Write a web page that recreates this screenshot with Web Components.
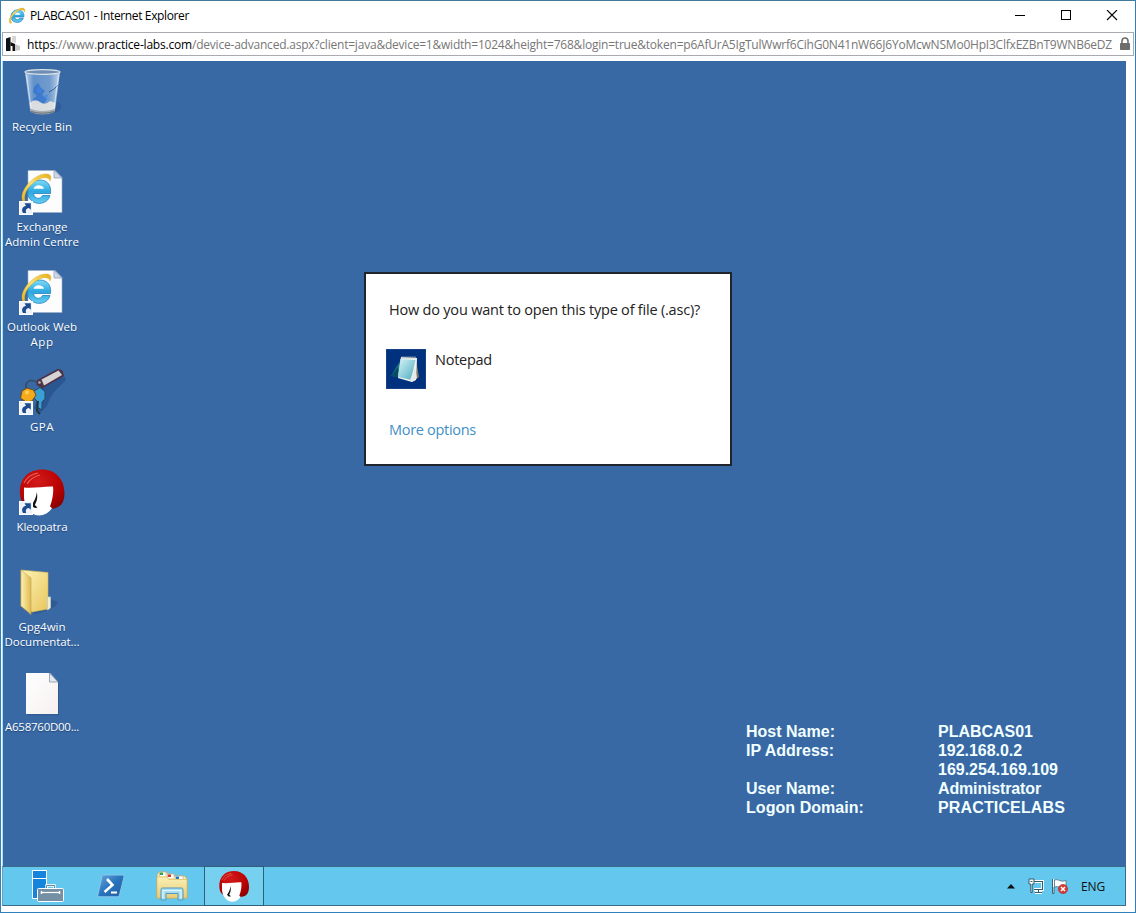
<!DOCTYPE html>
<html lang="en">
<head>
<meta charset="utf-8">
<title>PLABCAS01 - Internet Explorer</title>
<style>
html,body{margin:0;height:100%;overflow:hidden;background:#fff}
</style>
</head>
<body>
<browser-window></browser-window>
<script>
const ie = `
 <linearGradient id="b" x1="0" y1="0" x2="0" y2="1"><stop offset="0" stop-color="#7fdcf8"/><stop offset=".5" stop-color="#2aa7e0"/><stop offset="1" stop-color="#66cdf2"/></linearGradient>
 <linearGradient id="y" x1="0" y1="1" x2="1" y2="0"><stop offset="0" stop-color="#e9b41c"/><stop offset=".5" stop-color="#fbe274"/><stop offset="1" stop-color="#e6ad1a"/></linearGradient>`;
const arrow = `<g><rect x="1.500" y="33.500" width="13" height="13" fill="#eef3fa" stroke="#fff"/><path d="M5 45C3 41.500 4.500 38.500 8 37.700L6.500 35.200H12.800V41.800L10.800 40C7.800 40.500 7.300 42.500 8.300 45Z" fill="#1d4b8f"/></g>`;
const kleo = `
 <radialGradient id="r" cx=".4" cy=".3" r=".8"><stop offset="0" stop-color="#d21a1a"/><stop offset=".6" stop-color="#bb0303"/><stop offset="1" stop-color="#860000"/></radialGradient>
 <path d="M2 26C1 10 11 1.500 24 1.500C38 1.500 46.500 12 46.500 25C46.500 34 43 38 39 39.500C35 41 31 41 28 40L9 38C4.500 36 2.500 32 2 26Z" fill="url(#r)"/>
 <path d="M6 19.500C16 20.500 27 18 35 18.500C35.800 24 34.500 32 32 38.500L34 40C31.500 44.500 26 47.500 21 47.500C13 47.500 7 40 6 30Z" fill="#fff"/>
 <path d="M18.800 24C18.300 30 15.500 34.500 13.500 37C15.500 39.800 17 40.500 19.500 39.500L16.800 37C18.500 34 20 30 18.800 24Z" fill="#111"/>
 <path d="M6 15C9 9 14 6 20 5M9 16C12 11 16 8.500 22 7" fill="none" stroke="#f07a6c" stroke-width="1.100" opacity=".8"/>`;
const iePage = ie + `
 <path d="M10 2.500H37L44 9.500V44.500H10Z" fill="#fdfdfd" stroke="#9dadc6" stroke-width=".6"/>
 <path d="M36 2.500V10H44Z" fill="#cfd8e4" stroke="#8a9ab4" stroke-width=".7"/>
 <path d="M32 27.500C29.500 37.500 14 38.500 10 27.500C8 19 14 12 21.500 12C30 12 33.500 18 32.500 25.500H15.500C16 31 22.500 32 24.500 27.500Z" fill="url(#b)" stroke="#2383bd" stroke-width=".8"/>
 <path d="M15.500 20.800C16.500 16 25 16 26 20.800Z" fill="#fff"/>
 <path d="M5 34C-.5 23 17 4.500 29.500 6C33.500 7 33.500 10 32 13C31 8 23 9 17 13.500C9 19.500 5.500 26.500 7 32.500Z" fill="url(#y)" stroke="#d9a61d" stroke-width=".4"/>` + arrow;

const ICONS = {
 ie: ['0 0 18 18', ie + `<path d="M15.300 11.300C13.500 16.800 5 16.800 3.200 11.500C2 6 6 2.800 9.500 2.800C14.500 2.800 16.500 6.500 15.800 10H6.600C7 13 10.500 13.500 11.600 11.300Z" fill="url(#b)" stroke="#2b83be" stroke-width=".7"/><path d="M6.800 7.800C7.200 5.200 11.800 5.200 12.300 7.800Z" fill="#fff"/><path d="M2.500 16.500C-2 13 6 3 12.500 1.300C17 .3 17.500 3 16.300 5.200C16 1.500 11 2.500 7 6.200C2.700 10.500 1.500 14 4 15.500Z" fill="url(#y)" stroke="#c9a02a" stroke-width=".3"/>`],
 lab: ['0 0 16 16', `<path d="M6 0H10V7L6 6Z" fill="#d6d6d6"/><path d="M9 8L14 10V14L9 15Z" fill="#c9c9c9"/><path d="M0 2.500L4.500 1V15H0Z" fill="#111"/><path d="M4.500 6L9 8V15H6.500V10H4.500Z" fill="#111"/>`],
 lock: ['0 0 12 14', `<path d="M3 6V4A3 3 0 0 1 9 4V6" fill="none" stroke="#6d6d6d" stroke-width="1.600"/><rect x="1" y="6" width="10" height="7" rx=".8" fill="#6d6d6d"/>`],
 min: ['0 0 12 12', `<path d="M1 5.500H11" stroke="#000"/>`],
 max: ['0 0 12 12', `<rect x="1.500" y=".5" width="9" height="9" fill="none" stroke="#000"/>`],
 close: ['0 0 12 12', `<path d="M1 0L11 10M11 0L1 10" stroke="#000" stroke-width="1.100"/>`],
 bin: ['0 0 48 48', `
 <linearGradient id="g" x1="0" x2="1" y1="0" y2="0"><stop offset="0" stop-color="#d4e5f6" stop-opacity=".85"/><stop offset=".25" stop-color="#6f9fd6" stop-opacity=".75"/><stop offset=".7" stop-color="#89b1de" stop-opacity=".7"/><stop offset="1" stop-color="#e0edf8" stop-opacity=".85"/></linearGradient>
 <path d="M34 45C43 44 46 38 40 33" fill="#254f88" opacity=".5"/>
 <path d="M7 4H42L37 42C36 46.500 13 46.500 12 42Z" fill="url(#g)"/>
 <path d="M16 19L20 15L23 20L27 23L24 27L29 31L26 36H18L15 31L19 28L15 24Z" fill="#2468ce" opacity=".6"/><path d="M20 17L24 24L19 25ZM24 28L30 26L29 32Z" fill="#3f88e8" opacity=".6"/>
 <path d="M31 24Q36 22 40 17" stroke="#31639f" fill="none"/>
 <path d="M11.500 35Q17 30 22 34T32 33L37.500 35L37 41Q25 46 12.500 41Z" fill="#e8e5e2" opacity=".9"/>
 <ellipse cx="24.500" cy="4" rx="17.500" ry="2.400" fill="#6c8db5" stroke="#dce1e6" stroke-width="1.200"/>
 <path d="M12 41Q24.500 45 37 41L36.500 44Q24.500 49 12.500 44Z" fill="#a8adb3"/><path d="M13 43.500Q24.500 47 36 43.500" stroke="#555e69" fill="none" stroke-width=".8"/>
 <path d="M8.500 7L13 40M40.500 7L36 40" stroke="#edf5fc" stroke-width=".8" opacity=".8"/>`],
 iepage: ['0 0 48 48', iePage],
 keys: ['0 0 48 48', `
 <path d="M24 18L46 8L48 12L38 22Q32 28 29 38L21 46L16 40Z" fill="#234d86" opacity=".65"/>
 <path d="M8 20C7 13 13 10 20 15" fill="none" stroke="#3a4350" stroke-width="1.300"/>
 <path d="M19 12L40 .8L44.500 2.500L46 8L24 20.500L18.500 17Z" fill="#4d3349"/>
 <path d="M23.500 11.500L40.500 2.500L44 7L26 17.500Z" fill="#d7d4d5"/><circle cx="21.500" cy="14.500" r="1.300" fill="#b8b3b8"/>
 <path d="M16 23L22 19.500L27 23.500V31L24 34V42L19 39V33L15 29Z" fill="#399fd4" stroke="#234864"/><path d="M20 33L19 43L22 46" stroke="#27323a" stroke-width="2" fill="none"/>
 <path d="M4 23L9 20L15.500 22L18 27L14 33L8 34L2.500 30Z" fill="#f4aa1b" stroke="#6f4c19"/><circle cx="9" cy="24.500" r="2" fill="#ffcf57"/>` + arrow],
 kleolink: ['0 0 48 48', kleo + arrow],
 kleo: ['0 0 48 48', kleo],
 folder: ['0 0 48 48', `
 <linearGradient id="f" x1="0" x2="1" y1="0" y2="1"><stop offset="0" stop-color="#fff4b7"/><stop offset="1" stop-color="#e8c65d"/></linearGradient>
 <linearGradient id="h" x1="0" x2="1"><stop offset="0" stop-color="#fdf0b0"/><stop offset="1" stop-color="#dfba52"/></linearGradient>
 <path d="M32 31L40 34Q37 42 16 46L14 42Z" fill="#234d86" opacity=".5"/>
 <path d="M3 2L30 4.500V41L14 44L3 38Z" fill="url(#f)" stroke="#d5b350" stroke-width=".6"/>
 <path d="M3 2L13 10V46.500L3 38Z" fill="url(#h)" stroke="#c5a349" stroke-width=".6"/>
 <path d="M29.500 29H32.500V40L29.500 42Z" fill="#f3edc8" stroke="#b9cfc9" stroke-width=".8"/>`],
 page: ['0 0 48 48', `
 <linearGradient id="p" x1="0" x2="1" y1="0" y2="1"><stop offset="0" stop-color="#fff"/><stop offset="1" stop-color="#f6f0f0"/></linearGradient>
 <path d="M9 46.800H40.500V14" fill="none" stroke="#294f80" opacity=".6"/>
 <path d="M8 5H32L40 14V46H8Z" fill="url(#p)"/><path d="M31.500 5V14H40Z" fill="#e4e7ec" stroke="#8795aa" stroke-width=".8"/>`],
 notepad: ['0 0 40 40', `
 <linearGradient id="n" x1="0" x2="1" y1="0" y2="1"><stop offset="0" stop-color="#d8f4f6"/><stop offset="1" stop-color="#4cabc1"/></linearGradient>
 <rect width="40" height="40" fill="#00317f"/><rect x=".5" y=".5" width="39" height="39" fill="none" stroke="#174386"/>
 <path d="M5 27L14 12V28Z" fill="#1d777f"/><path d="M5 27L12 18V28Z" fill="#0a4b63"/>
 <path d="M30 10L33 28L28 32Z" fill="#7b7565"/>
 <path d="M15 8L31 9L30 31L26 33L12 29Z" fill="#f3f5f1"/><path d="M14.500 10L29.500 11L25 31L12 28Z" fill="url(#n)"/><path d="M29 18L31 29L26 33L24 31Z" fill="#e7e9e6"/>
 <path d="M15.500 8.500H30" stroke="#aeb7b8" stroke-width="2" stroke-dasharray="1.200 .8"/>`],
 server: ['0 0 32 32', `
 <path d="M.5 .5H14.500V28.500H.5Z" fill="#1584dc" stroke="#fff"/><path d="M0 8.500H15" stroke="#fff"/>
 <path d="M14.500 19V15.500H22.500V19" fill="none" stroke="#fff" stroke-width="2.400"/><path d="M14.500 19V15.500H22.500V19" fill="none" stroke="#6d8798" stroke-width="1"/>
 <rect x="5.500" y="18.500" width="26" height="13" rx="1" fill="#7590a4" stroke="#fff"/><path d="M9 22.500H28" stroke="#fff" stroke-width="1.200"/><path d="M9.500 21V24M27.500 21V24" stroke="#fff" stroke-width="1.500"/>`],
 ps: ['0 0 28 24', `
 <linearGradient id="q" x1="0" x2="1" y1="0" y2="1"><stop offset="0" stop-color="#6aa6dc"/><stop offset=".5" stop-color="#2674bd"/><stop offset="1" stop-color="#2b5ea0"/></linearGradient>
 <path d="M6.500 1H26Q27.500 1 27 3L22.500 21Q22 22.800 20.500 22.800H2Q.3 22.800 .8 21L5 2.500Q5.300 1 6.500 1Z" fill="url(#q)" stroke="#8ac5ea" stroke-width="1"/>
 <path d="M10 5L15.500 11L7.500 18" fill="none" stroke="#fff" stroke-width="2.600"/><path d="M14 18.500H20" stroke="#fff" stroke-width="2"/>`],
 explorer: ['0 0 32 32', `
 <linearGradient id="e" x1="0" x2="0" y1="0" y2="1"><stop offset="0" stop-color="#faf0b5"/><stop offset="1" stop-color="#e9cc78"/></linearGradient>
 <path d="M1 28V5L3 2H10L12 4H17L19 6H29L31 9V28Z" fill="url(#e)" stroke="#c8a957" stroke-width=".8"/>
 <path d="M3.500 6V2H10V6M11.500 8V4H18V8M19.500 9V6H27V9" fill="#fff" stroke="#b7b29e" stroke-width=".7"/><rect x="4" y="2.500" width="3" height="2.500" fill="#27a744"/><rect x="12" y="4.500" width="3" height="2.500" fill="#d1362e"/><rect x="20" y="6.500" width="3" height="2.500" fill="#2479ca"/>
 <path d="M1 7H11L13 9.500H31V28H1Z" fill="url(#e)" stroke="#d3b45f" stroke-width=".6"/>
 <path d="M5 30V19.500Q5 18 6.500 18H25.500Q27 18 27 19.500V30H22V23.500H10V30Z" fill="#a5ddf2" stroke="#5499bc"/><path d="M6.500 20.500H25.500M7 28V21M25 28V21" stroke="#e4f8ff" stroke-width="1.200"/>`],
 up: ['0 0 8 5', `<path d="M0 4.500L4 0L8 4.500Z" fill="#111"/>`],
 net: ['0 0 16 16', `<path d="M6 3.500H14.500V11.500H6M10.500 12V14.500M7 14.500H14" fill="none" stroke="#fff" stroke-width="2.800"/><path d="M6 3.500H14.500V11.500H6M10.500 12V14.500M7 14.500H14" fill="none" stroke="#315c70" stroke-width="1.100"/><path d="M1 1H6V6H4.200V14.500H2.800V6H1Z" fill="#fff" stroke="#315c70"/><path d="M2.500 3.500H4.500" stroke="#315c70"/>`],
 flag: ['0 0 16 16', `<path d="M1 1V15.500" stroke="#fff" stroke-width="2"/><path d="M.5 1V15.500H2V9" fill="none" stroke="#3c6577"/><path d="M2.500 2Q5 1 7.500 2.500T14 2.500V10Q10 11 8 9.500T2.500 9Z" fill="#fff" stroke="#52717d" stroke-width=".8"/><circle cx="11" cy="11" r="4.600" fill="#d63a36" stroke="#a82929" stroke-width=".6"/><path d="M9 9L13 13M13 9L9 13" stroke="#fff" stroke-width="1.500"/>`]
};

class UiIcon extends HTMLElement {
 constructor(){ super(); this.attachShadow({mode:'open'}); }
 connectedCallback(){
  const [box, art] = ICONS[this.getAttribute('name')];
  const w = this.getAttribute('w'), h = this.getAttribute('h') || w;
  this.shadowRoot.innerHTML = `<style>:host{display:block;flex:none;width:${w}px;height:${h}px}svg{display:block}</style><svg width="${w}" height="${h}" viewBox="${box}">${art}</svg>`;
 }
}

/* Text whose tracking is adjusted so that a line fills the given width. */
class FitText extends HTMLElement {
 constructor(){ super(); this.attachShadow({mode:'open'}).innerHTML = `<style>:host{display:block;flex:none;white-space:pre}span{display:inline-block}</style><span><slot></slot></span>`; }
 connectedCallback(){
  const span = this.shadowRoot.querySelector('span'), w = +this.getAttribute('w');
  this.style.width = w + 'px';
  span.style.letterSpacing = (w - span.getBoundingClientRect().width) / this.textContent.length + 'px';
 }
}

class DesktopItem extends HTMLElement {
 constructor(){ super(); this.attachShadow({mode:'open'}); }
 connectedCallback(){
  this.shadowRoot.innerHTML = `<style>
  :host{display:flex;flex-direction:column;align-items:center;width:78px;height:100px;color:#fff;font:11.5px/15px "Open Sans","Noto Sans",sans-serif;text-shadow:0 1px 1px #1d4477}
  ui-icon{margin-bottom:3px}</style><ui-icon name="${this.getAttribute('icon')}" w="48"></ui-icon><slot></slot>`;
 }
}

class TitleBar extends HTMLElement {
 constructor(){ super(); this.attachShadow({mode:'open'}).innerHTML = `<style>
  :host{display:flex;align-items:center;height:31px;padding:0 17px 2px 7px;box-sizing:border-box;font:12px/18px "Open Sans","Noto Sans",sans-serif;color:#000}
  .t{margin-left:4px;flex:1}.c{display:flex;gap:34px}</style>
  <ui-icon name="ie" w="18"></ui-icon><div class="t"><slot></slot></div><div class="c"><ui-icon name="min" w="12"></ui-icon><ui-icon name="max" w="12"></ui-icon><ui-icon name="close" w="12"></ui-icon></div>`; }
}

class AddressBar extends HTMLElement {
 constructor(){ super(); this.attachShadow({mode:'open'}).innerHTML = `<style>
  :host{display:flex;align-items:center;box-sizing:border-box;height:24px;margin:0 1px 5px;border:1px solid #a9abb0;padding:0 2px 0 3px;font:12px/20px "Open Sans","Noto Sans",sans-serif;color:#777}
  .u{display:flex;margin-left:5px;padding-top:2px;flex:1}</style>
  <ui-icon name="lab" w="16"></ui-icon><div class="u"><slot></slot></div><ui-icon name="lock" w="12" h="14"></ui-icon>`; }
}

class OpenDialog extends HTMLElement {
 constructor(){ super(); this.attachShadow({mode:'open'}).innerHTML = `<style>
  :host{position:absolute;left:362px;top:211px;width:368px;height:194px;box-sizing:border-box;border:2px solid #20242d;background:#fff;padding:25px 20px;font:14.500px/22px "Open Sans","Noto Sans",sans-serif;font-weight:400;color:#222}
  .a{margin-left:3px}.n{display:flex;gap:9px;margin:28px 0 30px}.m{color:#3f90c6}</style>
  <div class="a"><fit-text w="311">How do you want to open this type of file (.asc)?</fit-text></div>
  <div class="n"><ui-icon name="notepad" w="40"></ui-icon><fit-text w="57">Notepad</fit-text></div>
  <div class="a m"><fit-text w="87">More options</fit-text></div>`; }
}

class HostInfo extends HTMLElement {
 constructor(){ super(); this.attachShadow({mode:'open'}).innerHTML = `<style>
  :host{position:absolute;left:743px;top:661px;display:grid;grid-template-columns:192px 130px;grid-auto-rows:19px;font:bold 16px/19px "Liberation Sans",Arial,sans-serif;color:#f2ffff}
  fit-text{margin-left:1px}</style>
  <fit-text w="89">Host Name:</fit-text><fit-text w="95">PLABCAS01</fit-text>
  <fit-text w="88">IP Address:</fit-text><fit-text w="84">192.168.0.2</fit-text>
  <i></i><fit-text w="120">169.254.169.109</fit-text>
  <fit-text w="89">User Name:</fit-text><fit-text w="103">Administrator</fit-text>
  <fit-text w="118">Logon Domain:</fit-text><fit-text w="127">PRACTICELABS</fit-text>`; }
}

class TaskBar extends HTMLElement {
 constructor(){ super(); this.attachShadow({mode:'open'}).innerHTML = `<style>
  :host{display:flex;align-items:center;height:40px;box-sizing:border-box;border:1px solid #396c86;border-left-color:#6b9fb5;background:#64c8ee;padding-left:29px;font:12px/18px "Open Sans","Noto Sans",sans-serif;color:#111}
  .on{display:flex;align-items:center;justify-content:center;width:60px;height:40px;box-sizing:border-box;border:1px solid #2d6179;background:#76d1f0;margin:0 auto 0 16px}
  .tray{display:flex;align-items:center;padding-right:20px}</style>
  <ui-icon name="server" w="32"></ui-icon><ui-icon name="ps" w="28" h="24" style="margin:0 31px 0 33px"></ui-icon><ui-icon name="explorer" w="32"></ui-icon>
  <div class="on"><ui-icon name="kleo" w="32"></ui-icon></div>
  <div class="tray"><ui-icon name="up" w="8" h="5"></ui-icon><ui-icon name="net" w="16" style="margin:0 8px 0 13px"></ui-icon><ui-icon name="flag" w="16"></ui-icon><fit-text w="24" style="margin:2px 0 0 13px">ENG</fit-text></div>`; }
}

class RemoteDesktop extends HTMLElement {
 constructor(){ super(); this.attachShadow({mode:'open'}).innerHTML = `<style>
  :host{position:relative;display:flex;flex-direction:column;width:1124px;height:845px;margin-left:1px;background:#3869a5;box-sizing:border-box}
  .d{flex:1;padding:7px 0 0 0;border-left:1px solid #a9e0f0}</style>
  <div class="d">
   <desktop-item icon="bin"><fit-text w="60">Recycle Bin</fit-text></desktop-item>
   <desktop-item icon="iepage"><fit-text w="51">Exchange</fit-text><fit-text w="74">Admin Centre</fit-text></desktop-item>
   <desktop-item icon="iepage"><fit-text w="70">Outlook Web</fit-text><fit-text w="23">App</fit-text></desktop-item>
   <desktop-item icon="keys"><fit-text w="24">GPA</fit-text></desktop-item>
   <desktop-item icon="kleolink"><fit-text w="51">Kleopatra</fit-text></desktop-item>
   <desktop-item icon="folder"><fit-text w="47">Gpg4win</fit-text><fit-text w="75">Documentat...</fit-text></desktop-item>
   <desktop-item icon="page"><fit-text w="74">A658760D00...</fit-text></desktop-item>
  </div>
  <host-info></host-info><open-dialog></open-dialog><task-bar></task-bar>`; }
}

class BrowserWindow extends HTMLElement {
 constructor(){ super(); this.attachShadow({mode:'open'}).innerHTML = `<style>
  :host{display:block;box-sizing:border-box;width:1136px;height:913px;border:1px solid #2f80bd;border-top-color:#417b9c;background:#fff;overflow:hidden}
  b{font-weight:400;color:#000}</style>
  <title-bar><fit-text w="159">PLABCAS01 - Internet Explorer</fit-text></title-bar>
  <address-bar><fit-text w="28"><b>https</b></fit-text><fit-text w="42">://www.</fit-text><fit-text w="95"><b>practice-labs.com</b></fit-text><fit-text w="920">/device-advanced.aspx?client=java&amp;device=1&amp;width=1024&amp;height=768&amp;login=true&amp;token=p6AfUrA5IgTulWwrf6CihG0N41nW66J6YoMcwNSMo0HpI3ClfxEZBnT9WNB6eDZ</fit-text></address-bar>
  <remote-desktop></remote-desktop>`; }
}

customElements.define('browser-window', BrowserWindow);
customElements.define('title-bar', TitleBar);
customElements.define('address-bar', AddressBar);
customElements.define('remote-desktop', RemoteDesktop);
customElements.define('desktop-item', DesktopItem);
customElements.define('open-dialog', OpenDialog);
customElements.define('host-info', HostInfo);
customElements.define('task-bar', TaskBar);
customElements.define('ui-icon', UiIcon);
customElements.define('fit-text', FitText);
</script>
</body>
</html>
